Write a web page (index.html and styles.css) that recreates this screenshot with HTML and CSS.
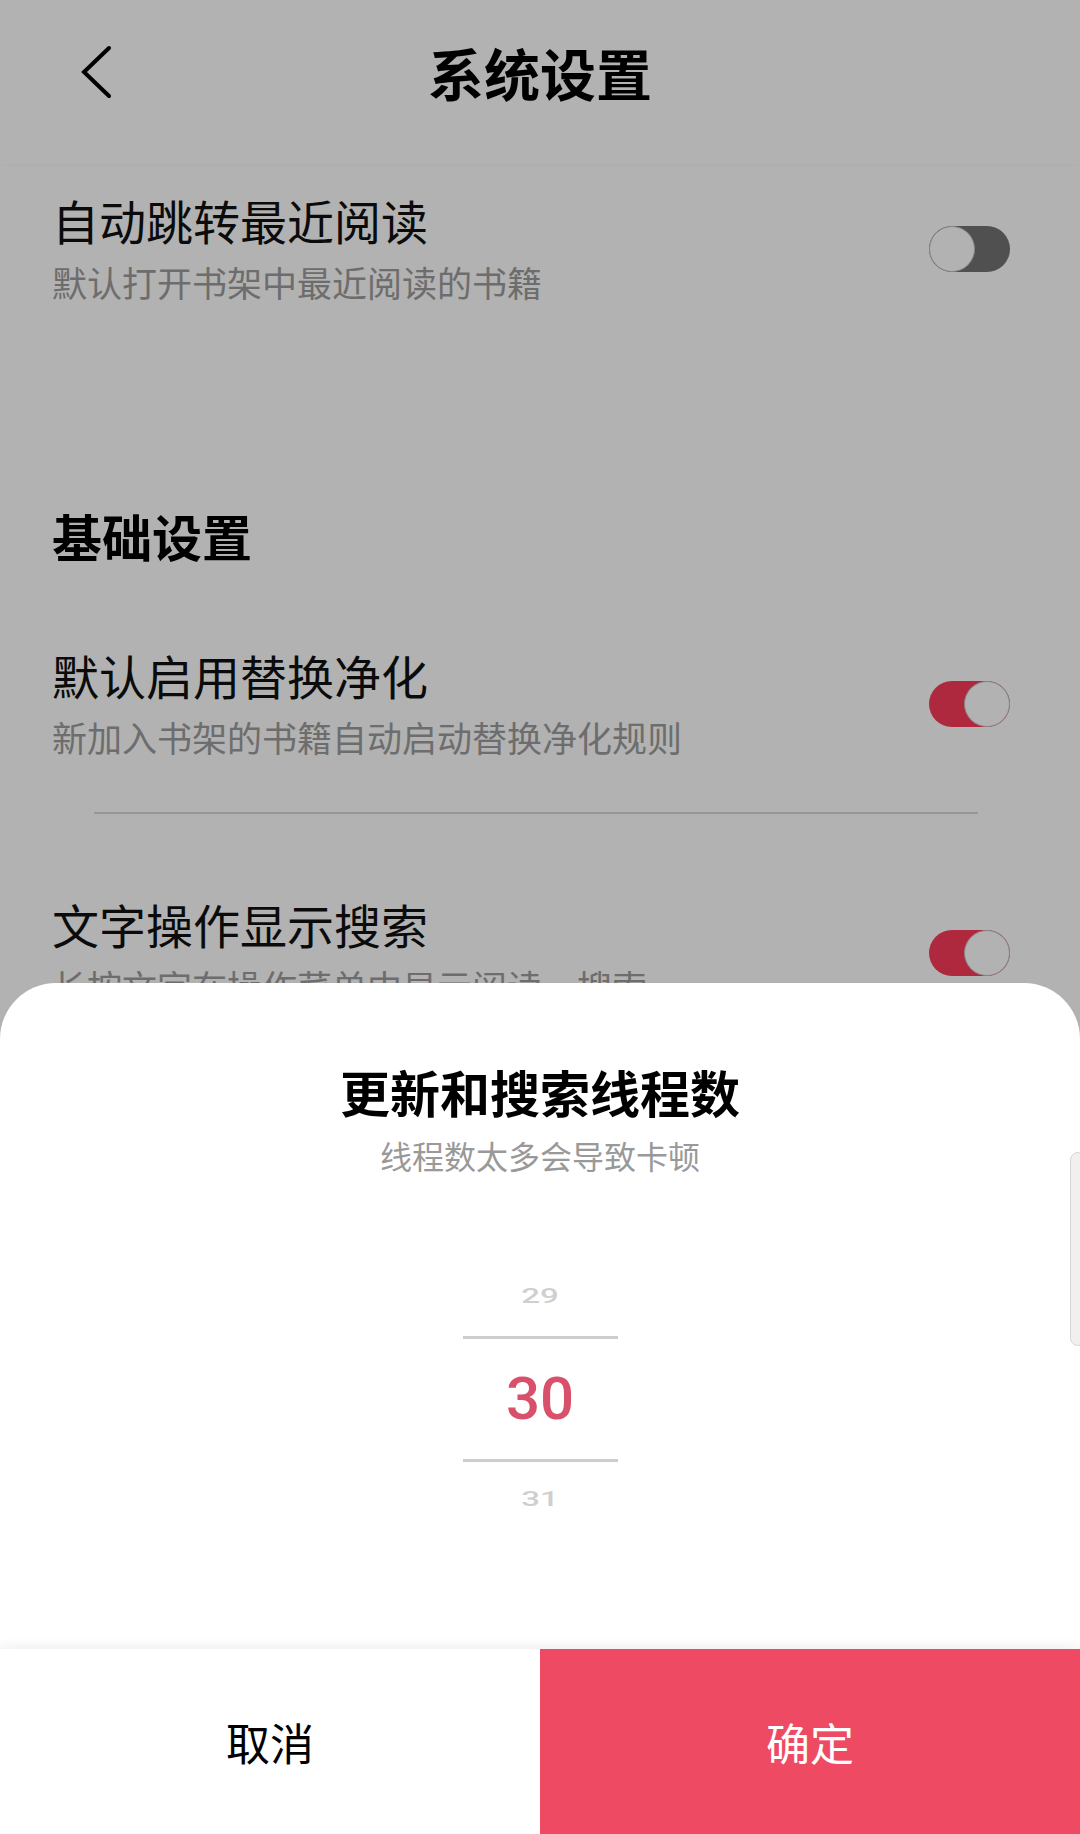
FILE: index.html
```html
<!DOCTYPE html>
<html lang="zh-CN">
<head>
  <meta charset="UTF-8">
  <title>系统设置</title>
  <link rel="stylesheet" href="styles.css">
</head>
<body>

  <div class="page">
    <header class="topbar">
      <div class="back">
        <svg width="34" height="54" viewBox="0 0 34 54">
          <polyline points="29,3 4,27 29,51" fill="none" stroke="#000" stroke-width="4" stroke-linecap="round" stroke-linejoin="miter"/>
        </svg>
      </div>
      <h1 class="topbar-title">系统设置</h1>
      <div></div>
    </header>

    <div class="row row-first">
      <div class="row-text">
        <div class="row-title">自动跳转最近阅读</div>
        <div class="row-sub">默认打开书架中最近阅读的书籍</div>
      </div>
      <div class="switch"></div>
    </div>

    <h2 class="section">基础设置</h2>

    <div class="row">
      <div class="row-text">
        <div class="row-title">默认启用替换净化</div>
        <div class="row-sub">新加入书架的书籍自动启动替换净化规则</div>
      </div>
      <div class="switch on"></div>
    </div>
    <div class="divider"></div>

    <div class="row">
      <div class="row-text">
        <div class="row-title">文字操作显示搜索</div>
        <div class="row-sub">长按文字在操作菜单中显示阅读·搜索</div>
      </div>
      <div class="switch on"></div>
    </div>
  </div>

  <div class="scrim"></div>

  <div class="sheet">
    <div class="sheet-title">更新和搜索线程数</div>
    <div class="sheet-sub">线程数太多会导致卡顿</div>

    <div class="picker">
      <div class="pick-item">29</div>
      <div class="pick-line"></div>
      <div class="pick-current">30</div>
      <div class="pick-line"></div>
      <div class="pick-item pick-below">31</div>
    </div>

    <div class="sheet-buttons">
      <div class="btn btn-cancel">取消</div>
      <div class="btn btn-ok">确定</div>
    </div>

    <div class="scroll-thumb"></div>
  </div>

</body>
</html>
```

FILE: styles.css
```css
body {
  margin: 0;
  width: 1080px;
  height: 1834px;
  position: relative;
  overflow: hidden;
  background: #fff;
  font-family: "Noto Sans CJK SC", "Noto Sans", sans-serif;
  color: #111;
}
.page {
  background: #fff;
}
.topbar {
  height: 144px;
  padding-bottom: 20px;
  display: grid;
  grid-template-columns: 1fr auto 1fr;
  align-items: center;
  box-shadow: 0 2px 4px rgba(0, 0, 0, 0.015);
}
.back {
  padding-left: 80px;
  height: 54px;
}
.topbar-title {
  margin: 0;
  font-size: 56px;
  font-weight: 700;
  line-height: 60px;
  color: #000;
}
.row {
  display: flex;
  align-items: center;
  justify-content: space-between;
  padding: 80px 70px 50px 52px;
}
.row-first {
  padding-top: 26px;
}
.row-title {
  font-size: 47px;
  line-height: 60px;
  color: #111;
}
.row-sub {
  margin-top: 7px;
  font-size: 35px;
  line-height: 50px;
  color: #9d9d9d;
}
.section {
  margin: 0;
  padding: 148px 0 0 52px;
  font-size: 50px;
  font-weight: 700;
  line-height: 60px;
  color: #000;
}
.divider {
  height: 2px;
  margin: 0 102px 0 94px;
  background: #d8d8d8;
}
.switch {
  width: 81px;
  height: 46px;
  border-radius: 23px;
  background: #737373;
  position: relative;
  flex-shrink: 0;
}
.switch::after {
  content: "";
  position: absolute;
  left: 0;
  top: 0;
  width: 44px;
  height: 44px;
  border-radius: 50%;
  background: #fff;
  border: 1px solid #c2c2c2;
}
.switch.on {
  background: #fb3b5a;
}
.switch.on::after {
  left: auto;
  right: 0;
}
.scrim {
  position: absolute;
  inset: 0;
  background: rgba(0, 0, 0, 0.3);
}
.sheet {
  position: absolute;
  left: 0;
  right: 0;
  bottom: 0;
  height: 851px;
  background: #fff;
  border-radius: 56px 56px 0 0;
  display: flex;
  flex-direction: column;
  align-items: center;
}
.sheet-title {
  margin-top: 78px;
  font-size: 50px;
  font-weight: 700;
  line-height: 60px;
  color: #000;
}
.sheet-sub {
  margin-top: 12px;
  font-size: 32px;
  line-height: 44px;
  color: #999;
}
.picker {
  margin-top: 79px;
  width: 155px;
  display: flex;
  flex-direction: column;
  align-items: center;
  font-family: Roboto, "Liberation Sans", sans-serif;
}
.pick-item {
  height: 80px;
  line-height: 80px;
  font-size: 33px;
  font-weight: 500;
  color: #cfcfcf;
  transform: scaleY(0.62);
}
.pick-below {
  height: 74px;
  line-height: 74px;
}
.pick-line {
  width: 100%;
  height: 3px;
  background: #cdcdcd;
}
.pick-current {
  height: 120px;
  line-height: 120px;
  font-size: 60px;
  font-weight: 500;
  color: #d8506a;
}
.sheet-buttons {
  margin-top: auto;
  width: 100%;
  height: 185px;
  display: flex;
  box-shadow: 0 -4px 10px rgba(0, 0, 0, 0.06);
}
.btn {
  flex: 1;
  display: flex;
  align-items: center;
  justify-content: center;
  font-size: 44px;
}
.btn-cancel {
  background: #fff;
  color: #000;
}
.btn-ok {
  background: #ef4a63;
  color: #fff;
}
.scroll-thumb {
  position: absolute;
  right: -6px;
  top: 169px;
  width: 14px;
  height: 192px;
  border-radius: 8px;
  background: #f0f0f0;
  border: 1px solid #d6d6d6;
}
```
